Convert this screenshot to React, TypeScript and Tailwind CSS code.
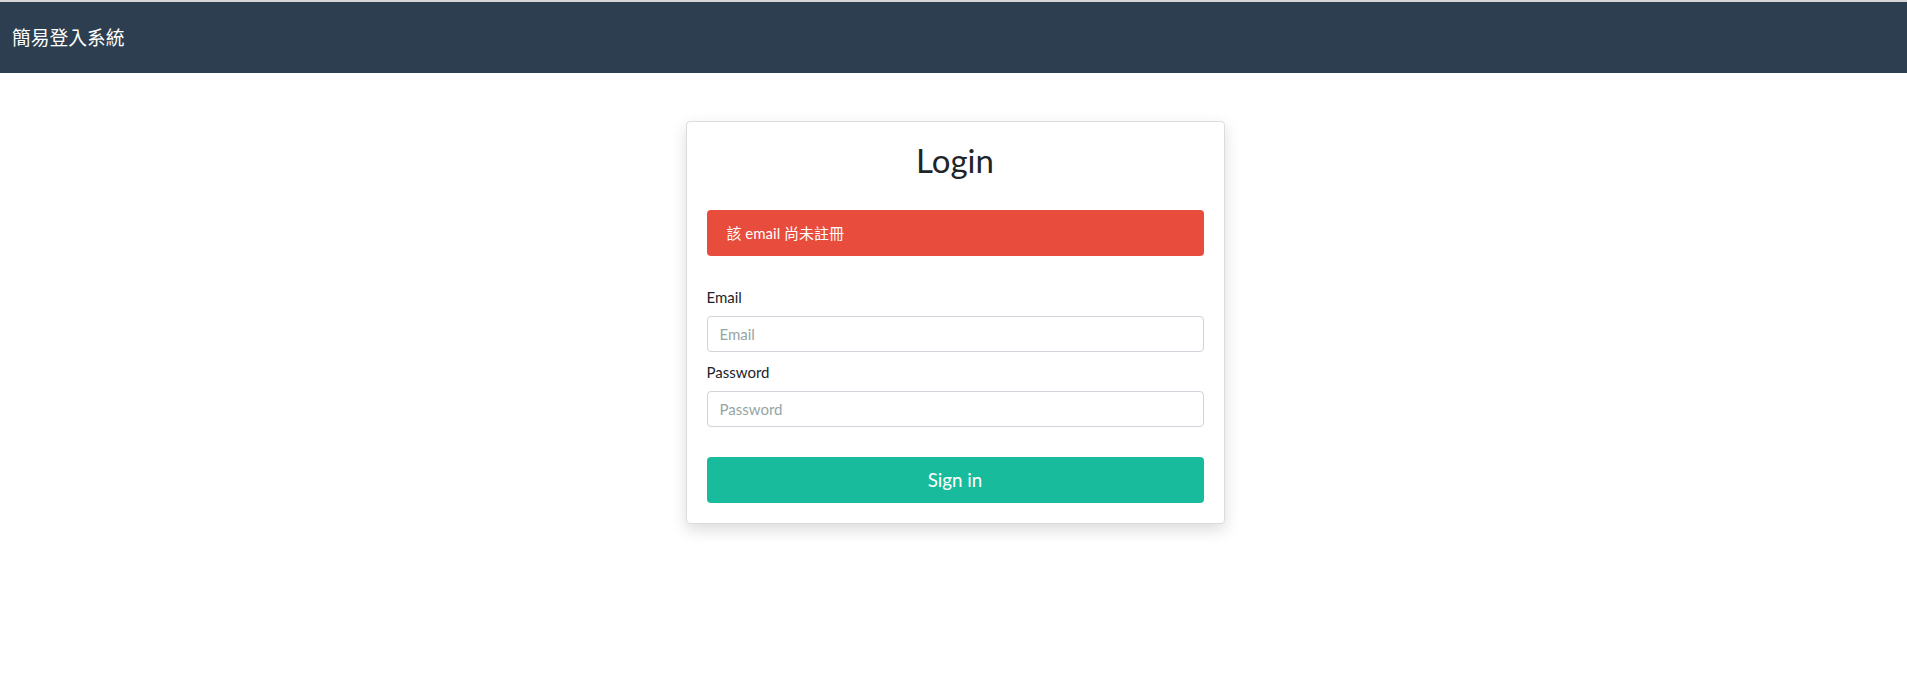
import React from "react";

const latin = "font-['Lato','Noto_Sans_CJK_TC',sans-serif]";

export default function App() {
    return (
        <div className={`min-h-screen bg-white text-[#212529] ${latin}`}>
            {/* Top bar */}
            <nav className="border-t-2 border-[#d6d6d6] bg-[#2c3e50] h-[73px] flex items-center px-3">
                <span className="text-[18.75px] text-white font-['Noto_Sans_CJK_TC',sans-serif]">簡易登入系統</span>
            </nav>

            <div className="pt-12 pb-10 pl-[3px]">
                <div className="mx-auto w-[539px] bg-white border border-[#dcdcdc] rounded shadow-[0_6px_16px_rgba(0,0,0,0.14)] p-5">
                    <h1 className="text-center text-[33px] leading-[36px] font-normal">Login</h1>

                    <div className="mt-8 bg-[#e74c3c] text-white rounded px-5 py-3 text-[15px] leading-[22px]">
                        該 email 尚未註冊
                    </div>

                    <form className="mt-[30px]" onSubmit={(e) => e.preventDefault()}>
                        <label htmlFor="email" className="block text-[15px] leading-[22px] mb-2">
                            Email
                        </label>
                        <input
                            id="email"
                            type="email"
                            placeholder="Email"
                            className="block w-full h-[36px] border border-[#ced4da] rounded px-3 text-[15px] placeholder:text-[#95a5a6] outline-none"
                        />

                        <label htmlFor="password" className="block mt-[9px] text-[15px] leading-[22px] mb-2">
                            Password
                        </label>
                        <input
                            id="password"
                            type="password"
                            placeholder="Password"
                            className="block w-full h-[36px] border border-[#ced4da] rounded px-3 text-[15px] placeholder:text-[#95a5a6] outline-none"
                        />

                        <button
                            type="submit"
                            className="mt-[30px] w-full h-[46px] bg-[#18bc9c] text-white rounded text-[18.75px]"
                        >
                            Sign in
                        </button>
                    </form>
                </div>
            </div>
        </div>
    );
}
